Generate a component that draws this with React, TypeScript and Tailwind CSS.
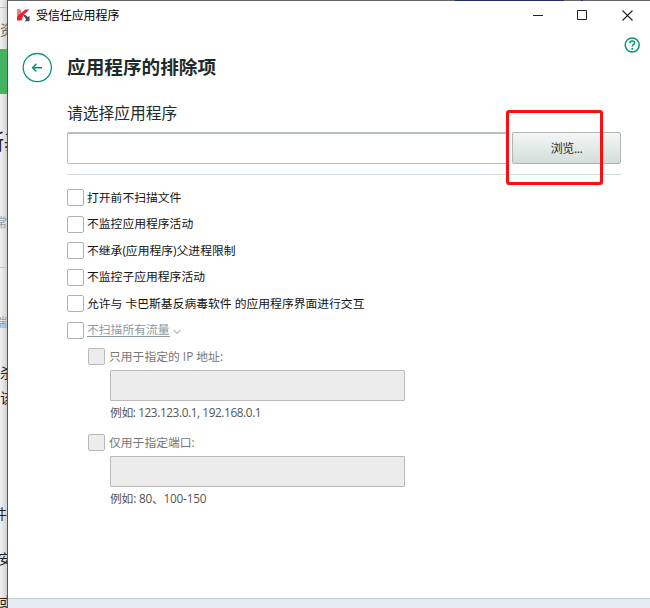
import { useState } from 'react'
import type { ReactNode } from 'react'

const options = [
  '打开前不扫描文件',
  '不监控应用程序活动',
  '不继承(应用程序)父进程限制',
  '不监控子应用程序活动',
  '允许与 卡巴斯基反病毒软件 的应用程序界面进行交互',
]

const restrictions = [
  { id: 'ip', label: '只用于指定的 IP 地址:', hint: '例如: 123.123.0.1, 192.168.0.1', hintClass: 'tracking-[-0.4px]' },
  { id: 'port', label: '仅用于指定端口:', hint: '例如: 80、100-150', hintClass: 'tracking-[-0.22px]' },
]

function Checkbox({ disabled, checked, onChange }: { disabled?: boolean; checked?: boolean; onChange?: () => void }) {
  return (
    <input
      type="checkbox"
      disabled={disabled}
      checked={checked ?? false}
      onChange={onChange}
      className="h-[17px] w-[17px] shrink-0 appearance-none rounded-[2px] border border-[#a9b4b3] bg-white checked:bg-[#00a07a] disabled:border-[#b9b9b9] disabled:bg-[#ececec]"
    />
  )
}

function Row({ children }: { children: ReactNode }) {
  return <div className="flex h-[26.5px] items-center gap-[3px] whitespace-nowrap">{children}</div>
}

// Sliver of the main window that stays visible left of the dialog
function BackgroundStrip() {
  return (
    <div className="flex h-full w-[7px] shrink-0 flex-col overflow-hidden whitespace-nowrap bg-linear-to-r from-[#f2f2f2] to-[#d2d2d2] text-[14px] leading-[20px] text-[#222]">
      <div className="h-[8px] shrink-0 border-b border-[#bdbdbd]" />
      <div className="h-[41px] shrink-0 pt-[12px] text-[#666]">资</div>
      <div className="h-[45px] shrink-0 bg-[#43b35f]" />
      <div className="mt-[33px] ml-[-17px] h-[81px] shrink-0 text-[21px] leading-[28px]">斯基</div>
      <div className="mt-[5px] ml-[-5px] h-[54px] shrink-0 text-[12px] text-[#8d9aa6]">常</div>
      <div className="h-px shrink-0 bg-[#c4c4c4]" />
      <div className="mt-[45px] ml-[-5px] h-[50px] shrink-0 text-[12px] text-[#7f9dc0]">端</div>
      <div className="h-[25px] shrink-0">杀</div>
      <div className="h-[116px] shrink-0">该</div>
      <div className="ml-[-7px] h-[45px] shrink-0">件</div>
      <div className="ml-[-2px] h-[43px] shrink-0">安</div>
      <div className="ml-[-1px] shrink-0">或</div>
    </div>
  )
}

function TitleBar() {
  return (
    <div className="flex h-[29px] items-center pr-[17px] pl-[9px]">
      <svg width="14" height="13" viewBox="0 0 14 13">
        <path d="M0 .5h3.6v4L8.3.5h4L6.8 5.8 4.4 11.5H0z" fill="#e5232b" />
        <path d="M0 .5h3.6v3.6L0 8z" fill="#f3777b" />
        <path d="M6.2 6.2l1.6-.6 3 2.4 1.7-1.2v5.4H7.6l1.6-1.6z" fill="#4d4d4d" />
      </svg>
      <span className="ml-[5px] text-[12px] tracking-[-0.1px] text-black">受信任应用程序</span>
      <div className="ml-auto flex items-center text-[#222]">
        <svg width="10" height="11" viewBox="0 0 10 11" fill="none" stroke="currentColor">
          <path d="M0 5.5h10" />
        </svg>
        <svg className="ml-[34px]" width="10" height="11" viewBox="0 0 10 11" fill="none" stroke="currentColor">
          <path d="M.5 .5h9v9h-9z" />
        </svg>
        <svg className="ml-[35px]" width="11" height="11" viewBox="0 0 11 11" fill="none" stroke="currentColor">
          <path d="M.5 .5l10 10M10.5 .5l-10 10" strokeWidth="1.1" />
        </svg>
      </div>
    </div>
  )
}

export default function App() {
  const [path, setPath] = useState('')
  const [selected, setSelected] = useState<string[]>([])

  const toggle = (label: string) =>
    setSelected((s) => (s.includes(label) ? s.filter((l) => l !== label) : [...s, label]))

  return (
    <div className="flex h-[608px] w-[650px] overflow-hidden bg-white font-['Open_Sans','Noto_Sans_CJK_SC',sans-serif]">
      <BackgroundStrip />
      <div className="relative flex min-w-0 flex-1 flex-col border-l border-[#555]">
        <div className="flex h-px shrink-0 bg-[#666]">
          <div className="ml-[447px] w-[109px] bg-[#202c66]" />
          <div className="ml-[17px] w-[2px] bg-[#202c99]" />
        </div>
        <TitleBar />

        <div className="flex h-[73px] shrink-0 pr-[10px] pl-[14px]">
          <button type="button" aria-label="返回" className="mt-[22px] h-[31px] w-[31px] text-[#079776]">
            <svg width="31" height="31" viewBox="0 0 31 31" fill="none" stroke="currentColor">
              <circle cx="15.3" cy="15.6" r="14.1" strokeWidth="1.3" />
              <path d="M20 15.7H10.8M14.4 11.9l-3.8 3.8 3.8 3.8" strokeWidth="1.5" />
            </svg>
          </button>
          <h1 className="mt-[23px] ml-[14px] text-[18.65px] leading-[28px] font-bold text-[#1d2b2b]">应用程序的排除项</h1>
          <button type="button" aria-label="帮助" className="mt-[7px] ml-auto h-4 w-4 text-[#079776]">
            <svg width="16" height="16" viewBox="0 0 16 16" fill="none" stroke="currentColor">
              <circle cx="8.2" cy="8" r="7" strokeWidth="1.5" />
              <path d="M5.8 6.3c0-1.5 1-2.3 2.4-2.3s2.4.8 2.4 2c0 1.6-2.4 1.7-2.4 3.6" strokeWidth="1.5" />
              <path d="M8.2 11v1.7" strokeWidth="1.7" />
            </svg>
          </button>
        </div>

        <div className="flex-1 pr-[29px] pl-[59px]">
          <h2 className="h-[29px] text-[15.75px] leading-[21px] text-[#1d2b2b]">请选择应用程序</h2>
          <div className="flex h-[43px] items-start border-b border-[#d3dde1]">
            <input
              value={path}
              onChange={(e) => setPath(e.target.value)}
              className="h-8 w-[441px] rounded-[2px] border border-t-2 border-[#b5c0be] bg-white px-2 text-[12px] outline-none"
            />
            <button
              type="button"
              className="ml-1 h-8 w-[109px] rounded-[2px] border border-[#aeb5b4] bg-linear-to-b from-[#f4f6f6] to-[#d3dedb] pt-0.5 text-[12px] tracking-[-0.4px] text-[#1d2b2b]"
            >
              浏览...
            </button>
          </div>

          <div className="pt-[9.5px] text-[11.8px] text-[#111]">
            {options.map((label) => (
              <Row key={label}>
                <Checkbox checked={selected.includes(label)} onChange={() => toggle(label)} />
                <span>{label}</span>
              </Row>
            ))}
            <Row>
              <Checkbox checked={selected.includes('traffic')} onChange={() => toggle('traffic')} />
              <span className="border-b border-[#8c9a9e] leading-[13px] text-[#8c9a9e]">不扫描所有流量</span>
              <svg className="mt-1" width="8" height="6" viewBox="0 0 8 6" fill="none" stroke="#b4bcbe">
                <path d="M.7 1L4 4.5 7.3 1" strokeWidth="1.2" />
              </svg>
            </Row>
          </div>

          <div className="pl-[21px] text-[11.8px] text-[#777]">
            {restrictions.map(({ id, label, hint, hintClass }) => (
              <div key={id} className="h-[86px]">
                <Row>
                  <Checkbox disabled />
                  <span className="pl-px">{label}</span>
                </Row>
                <div className="pl-[22px]">
                  <input
                    disabled
                    className="block h-[31px] w-[295px] rounded-[1px] border border-[#b9b9b9] bg-[#ececec]"
                  />
                  <div className="pt-[2px] leading-[18px] text-[#555]">
                    <span className={hintClass}>{hint}</span>
                  </div>
                </div>
              </div>
            ))}
          </div>
        </div>

        <div className="h-[10px] shrink-0 border-t border-[#c3cfd3] bg-[#e5ebee]" />

        {/* highlight frame around the browse button */}
        <div className="pointer-events-none absolute top-[110px] left-[498px] h-[75px] w-[97px] rounded-[3px] border-3 border-[#ff0d0d]" />
      </div>
    </div>
  )
}
